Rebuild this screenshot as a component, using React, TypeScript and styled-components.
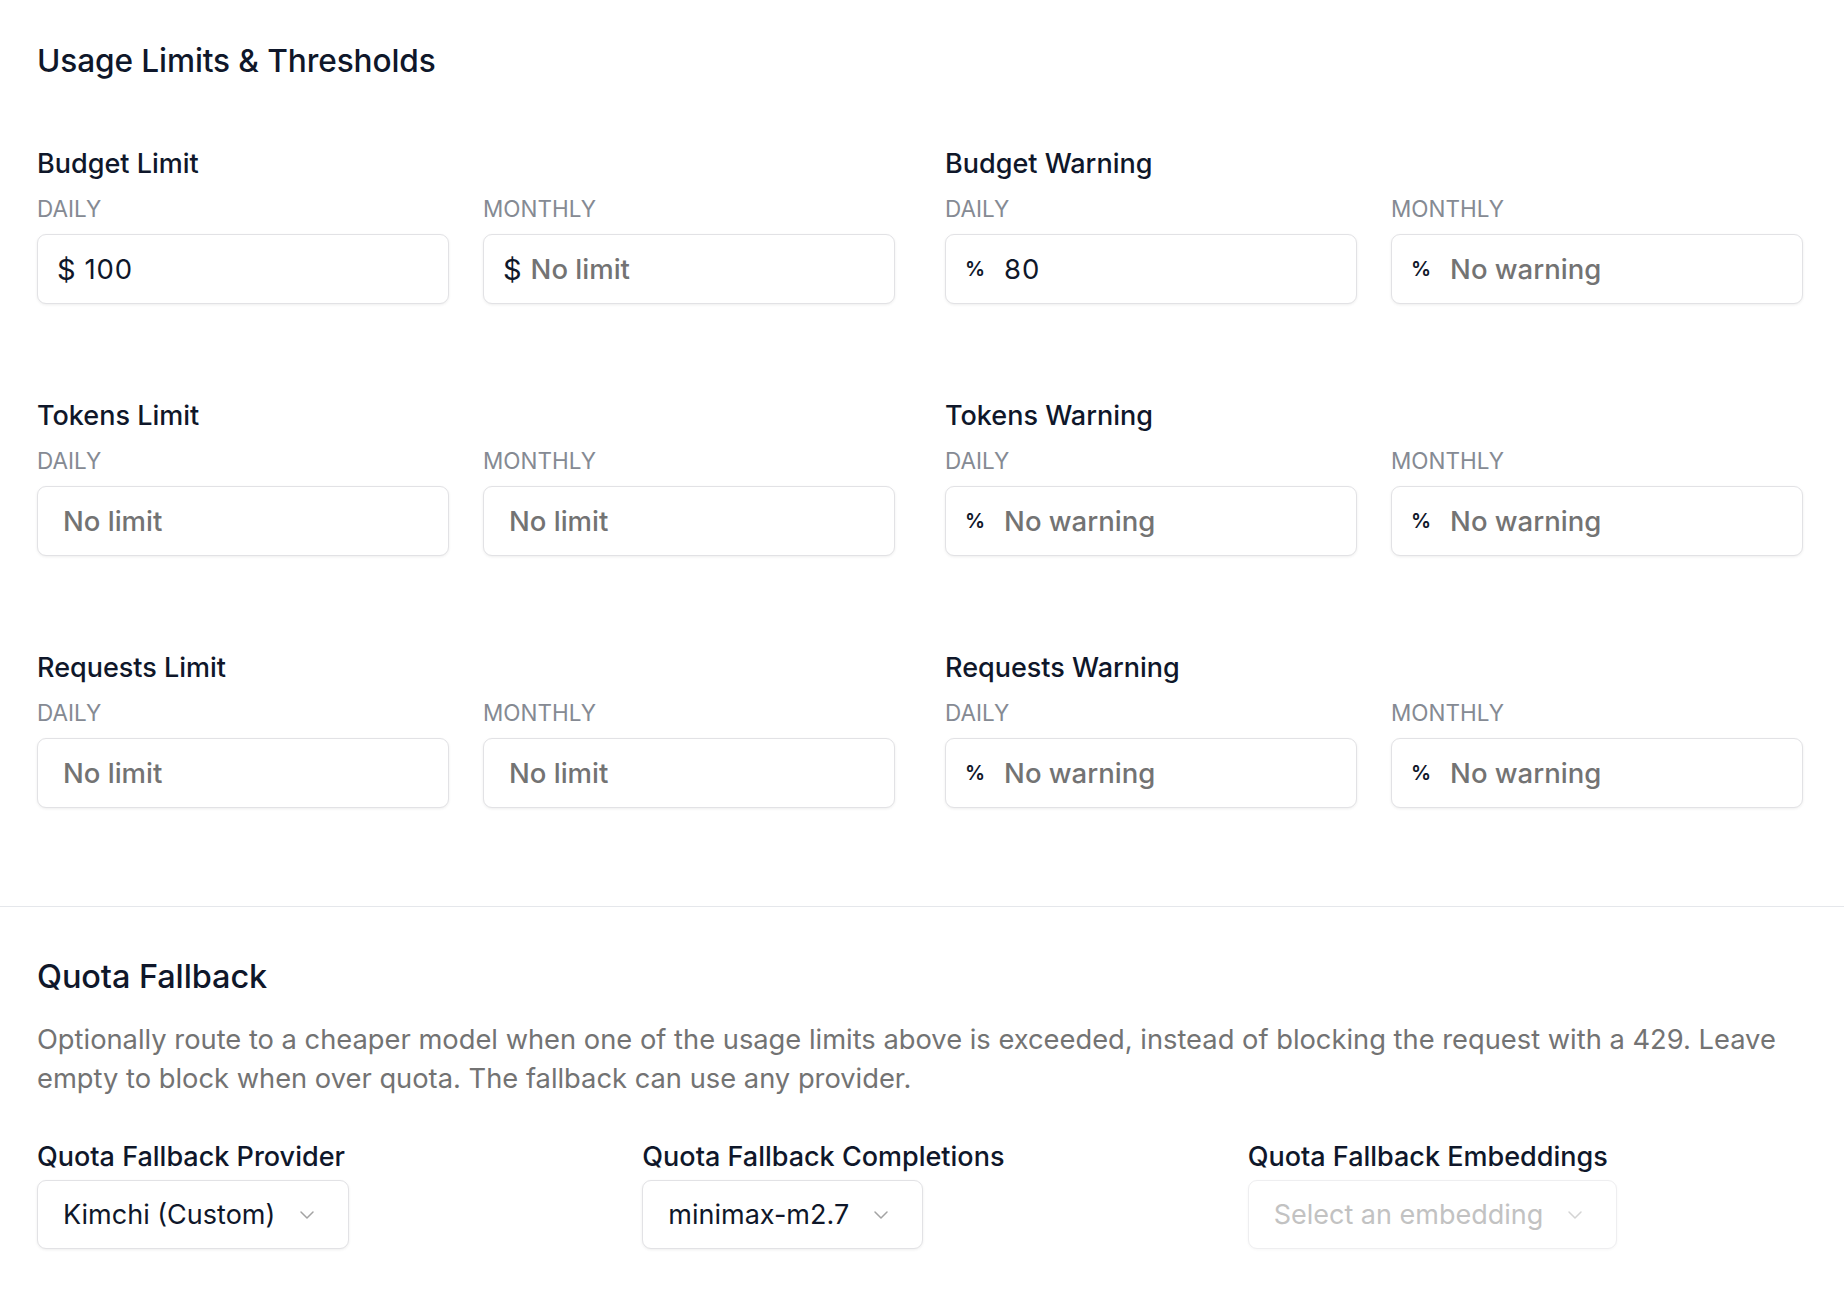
import React from 'react';
import styled, { createGlobalStyle } from 'styled-components';
import { ChevronDown } from 'lucide-react';

const GlobalStyle = createGlobalStyle`
  * {
    box-sizing: border-box;
  }
  body {
    margin: 0;
    background: #ffffff;
    font-family: Inter, "Liberation Sans", sans-serif;
    color: #0f172a;
  }
`;

const Page = styled.main`
  width: 100%;
  min-height: 100vh;
  background: #ffffff;
`;

const Section = styled.section<{ divided?: boolean }>`
  padding: ${({ divided }) => (divided ? '50px 41px 40px 37px' : '41px 41px 98px 37px')};
  border-bottom: ${({ divided }) => (divided ? 'none' : '1px solid #e5e7eb')};
`;

const SectionTitle = styled.h2<{ small?: boolean }>`
  margin: 0;
  font-size: ${({ small }) => (small ? '32.5px' : '31.6px')};
  line-height: 40px;
  font-weight: 500;
  color: #0f172a;
  letter-spacing: -0.1px;
`;

const LimitsGrid = styled.div`
  margin-top: 66px;
  display: grid;
  grid-template-columns: 1fr 1fr;
  column-gap: 50px;
  row-gap: 95px;
`;

const Group = styled.div`
  display: flex;
  flex-direction: column;
`;

const GroupLabel = styled.div`
  font-size: 27px;
  line-height: 34px;
  font-weight: 500;
  color: #0f172a;
`;

const Pair = styled.div`
  margin-top: 14px;
  display: grid;
  grid-template-columns: 1fr 1fr;
  column-gap: 34px;
`;

const Field = styled.div`
  display: flex;
  flex-direction: column;
`;

const SubLabel = styled.div`
  font-size: 22.5px;
  line-height: 28px;
  font-weight: 400;
  color: #858a93;
  text-transform: uppercase;
  margin-bottom: 11px;
`;

const InputBox = styled.div<{ hasPrefix?: boolean }>`
  height: 70px;
  display: flex;
  align-items: center;
  padding: 0 24px 0 ${({ hasPrefix }) => (hasPrefix ? '19px' : '25px')};
  border: 1.5px solid #e2e2e5;
  border-radius: 9px;
  background: #ffffff;
  box-shadow: 0 1px 3px rgba(0, 0, 0, 0.07);
`;

const Prefix = styled.span<{ percent?: boolean }>`
  color: #0f172a;
  font-size: ${({ percent }) => (percent ? '20px' : '29px')};
  font-weight: ${({ percent }) => (percent ? 600 : 400)};
  margin-right: ${({ percent }) => (percent ? '19px' : '9px')};
  line-height: 1;
`;

const Value = styled.span<{ empty?: boolean }>`
  font-size: 27.5px;
  color: ${({ empty }) => (empty ? '#737373' : '#0f172a')};
  font-weight: ${({ empty }) => (empty ? 500 : 400)};
  letter-spacing: ${({ empty }) => (empty ? '0' : '0.8px')};
`;

const Description = styled.p`
  margin: 23px 0 0;
  font-size: 27.3px;
  line-height: 39px;
  color: #737373;
  font-weight: 400;
`;

const FallbackGrid = styled.div`
  margin-top: 42px;
  display: grid;
  grid-template-columns: repeat(3, 1fr);
  column-gap: 50px;
`;

const SelectField = styled.div`
  display: flex;
  flex-direction: column;
  align-items: flex-start;
  gap: 6px;
`;

const SelectBox = styled.div<{ disabled?: boolean }>`
  height: 69px;
  display: inline-flex;
  align-items: center;
  gap: 20px;
  padding: 0 29px 0 25px;
  border: 1.5px solid ${({ disabled }) => (disabled ? '#eeeef0' : '#e2e2e5')};
  border-radius: 9px;
  background: #ffffff;
  box-shadow: 0 1px 3px rgba(0, 0, 0, ${({ disabled }) => (disabled ? 0.035 : 0.07)});
  font-size: 27px;
  color: ${({ disabled }) => (disabled ? '#c2c2c2' : '#0f172a')};
  svg {
    color: ${({ disabled }) => (disabled ? '#d4d4d4' : '#a3a3a3')};
  }
`;

type InputSpec = { prefix?: '$' | '%'; value?: string; placeholder: string };

type GroupSpec = { label: string; daily: InputSpec; monthly: InputSpec };

const groups: GroupSpec[] = [
  { label: 'Budget Limit', daily: { prefix: '$', value: '100', placeholder: 'No limit' }, monthly: { prefix: '$', placeholder: 'No limit' } },
  { label: 'Budget Warning', daily: { prefix: '%', value: '80', placeholder: 'No warning' }, monthly: { prefix: '%', placeholder: 'No warning' } },
  { label: 'Tokens Limit', daily: { placeholder: 'No limit' }, monthly: { placeholder: 'No limit' } },
  { label: 'Tokens Warning', daily: { prefix: '%', placeholder: 'No warning' }, monthly: { prefix: '%', placeholder: 'No warning' } },
  { label: 'Requests Limit', daily: { placeholder: 'No limit' }, monthly: { placeholder: 'No limit' } },
  { label: 'Requests Warning', daily: { prefix: '%', placeholder: 'No warning' }, monthly: { prefix: '%', placeholder: 'No warning' } },
];

const LimitInput: React.FC<{ spec: InputSpec }> = ({ spec }) => (
  <InputBox hasPrefix={!!spec.prefix}>
    {spec.prefix ? <Prefix percent={spec.prefix === '%'}>{spec.prefix}</Prefix> : null}
    <Value empty={!spec.value}>{spec.value ?? spec.placeholder}</Value>
  </InputBox>
);

const App: React.FC = () => {
  return (
    <Page>
      <GlobalStyle />
      <Section>
        <SectionTitle>Usage Limits &amp; Thresholds</SectionTitle>
        <LimitsGrid>
          {groups.map((g) => (
            <Group key={g.label}>
              <GroupLabel>{g.label}</GroupLabel>
              <Pair>
                <Field>
                  <SubLabel>Daily</SubLabel>
                  <LimitInput spec={g.daily} />
                </Field>
                <Field>
                  <SubLabel>Monthly</SubLabel>
                  <LimitInput spec={g.monthly} />
                </Field>
              </Pair>
            </Group>
          ))}
        </LimitsGrid>
      </Section>
      <Section divided>
        <SectionTitle small>Quota Fallback</SectionTitle>
        <Description>
          Optionally route to a cheaper model when one of the usage limits above is exceeded, instead of blocking the
          request with a 429. Leave empty to block when over quota. The fallback can use any provider.
        </Description>
        <FallbackGrid>
          <SelectField>
            <GroupLabel>Quota Fallback Provider</GroupLabel>
            <SelectBox>
              Kimchi (Custom)
              <ChevronDown size={24} strokeWidth={1.5} />
            </SelectBox>
          </SelectField>
          <SelectField>
            <GroupLabel>Quota Fallback Completions</GroupLabel>
            <SelectBox>
              minimax-m2.7
              <ChevronDown size={24} strokeWidth={1.5} />
            </SelectBox>
          </SelectField>
          <SelectField>
            <GroupLabel>Quota Fallback Embeddings</GroupLabel>
            <SelectBox disabled>
              Select an embedding
              <ChevronDown size={24} strokeWidth={1.5} />
            </SelectBox>
          </SelectField>
        </FallbackGrid>
      </Section>
    </Page>
  );
};

export default App;
